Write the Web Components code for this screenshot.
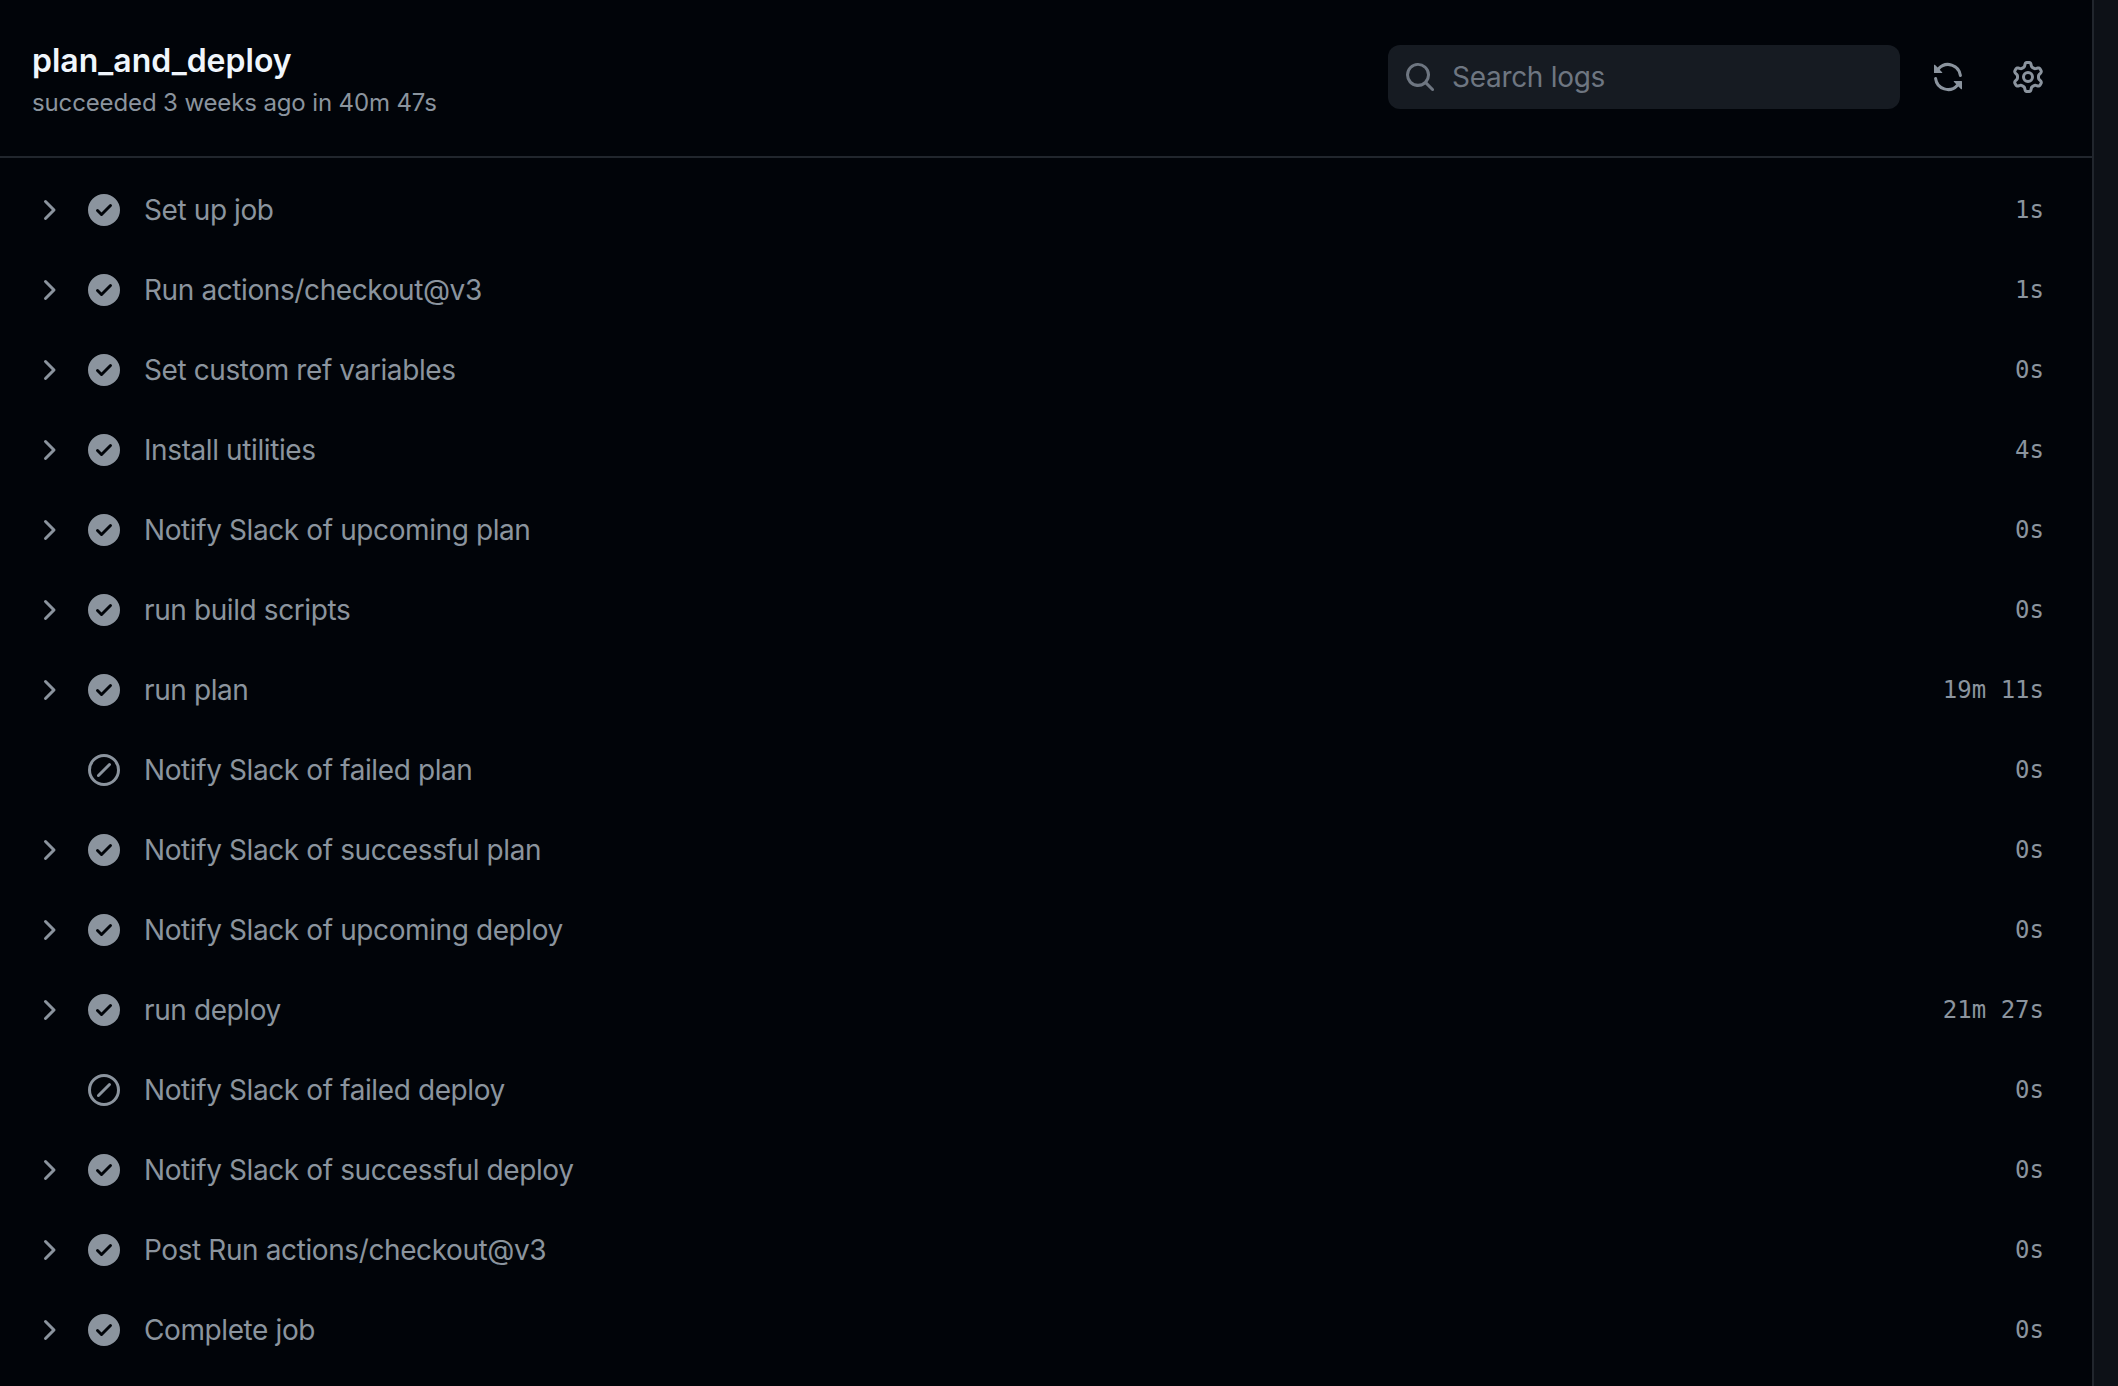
<!DOCTYPE html>
<html>
<head>
<meta charset="utf-8">
<title>plan_and_deploy</title>
<style>
  html, body { margin: 0; height: 100%; background: #0d1117; }
  body { font-family: Inter, "Liberation Sans", sans-serif; overflow: hidden; }
</style>
</head>
<body>
<job-page>
  <job-header>
    <span slot="title">plan_and_deploy</span>
    <span slot="meta">succeeded 3 weeks ago in 40m 47s</span>
  </job-header>
  <job-step status="success" time="1s">Set up job</job-step>
  <job-step status="success" time="1s">Run actions/checkout@v3</job-step>
  <job-step status="success" time="0s">Set custom ref variables</job-step>
  <job-step status="success" time="4s">Install utilities</job-step>
  <job-step status="success" time="0s">Notify Slack of upcoming plan</job-step>
  <job-step status="success" time="0s">run build scripts</job-step>
  <job-step status="success" time="19m 11s">run plan</job-step>
  <job-step status="skipped" time="0s">Notify Slack of failed plan</job-step>
  <job-step status="success" time="0s">Notify Slack of successful plan</job-step>
  <job-step status="success" time="0s">Notify Slack of upcoming deploy</job-step>
  <job-step status="success" time="21m 27s">run deploy</job-step>
  <job-step status="skipped" time="0s">Notify Slack of failed deploy</job-step>
  <job-step status="success" time="0s">Notify Slack of successful deploy</job-step>
  <job-step status="success" time="0s">Post Run actions/checkout@v3</job-step>
  <job-step status="success" time="0s">Complete job</job-step>
</job-page>

<script>
const ICONS = {
  check: 'M8 16A8 8 0 1 1 8 0a8 8 0 0 1 0 16Zm3.78-9.72a.751.751 0 0 0-.018-1.042.751.751 0 0 0-1.042-.018L6.75 9.19 5.28 7.72a.751.751 0 0 0-1.042.018.751.751 0 0 0-.018 1.042l2 2a.75.75 0 0 0 1.06 0Z',
  skip: 'M8 0a8 8 0 1 1 0 16A8 8 0 0 1 8 0ZM1.5 8a6.5 6.5 0 1 0 13 0 6.5 6.5 0 0 0-13 0Zm9.78-2.22-5.5 5.5a.749.749 0 0 1-1.275-.326.749.749 0 0 1 .215-.734l5.5-5.5a.751.751 0 0 1 1.042.018.751.751 0 0 1 .018 1.042Z',
  chevron: 'M6.22 3.22a.75.75 0 0 1 1.06 0l4.25 4.25a.75.75 0 0 1 0 1.06l-4.25 4.25a.751.751 0 0 1-1.042-.018.751.751 0 0 1-.018-1.042L9.94 8 6.22 4.28a.75.75 0 0 1 0-1.06Z',
  search: 'M10.68 11.74a6 6 0 0 1-7.922-8.982 6 6 0 0 1 8.982 7.922l3.04 3.04a.749.749 0 0 1-.326 1.275.749.749 0 0 1-.734-.215ZM11.5 7a4.499 4.499 0 1 0-8.997 0A4.499 4.499 0 0 0 11.5 7Z',
  sync: 'M1.705 8.005a.75.75 0 0 1 .834.656 5.5 5.5 0 0 0 9.592 2.97l-1.204-1.204a.25.25 0 0 1 .177-.427h3.646a.25.25 0 0 1 .25.25v3.646a.25.25 0 0 1-.427.177l-1.38-1.38A7.002 7.002 0 0 1 1.05 8.84a.75.75 0 0 1 .656-.834ZM8 2.5a5.487 5.487 0 0 0-4.131 1.869l1.204 1.204A.25.25 0 0 1 4.896 6H1.25A.25.25 0 0 1 1 5.75V2.104a.25.25 0 0 1 .427-.177l1.38 1.38A7.002 7.002 0 0 1 14.95 7.16a.75.75 0 0 1-1.49.178A5.5 5.5 0 0 0 8 2.5Z',
  gear: 'M8 0a8.2 8.2 0 0 1 .701.031C9.444.095 9.99.645 10.16 1.29l.288 1.107c.018.066.079.158.212.224.231.114.454.243.668.386.123.082.233.09.299.071l1.103-.303c.644-.176 1.392.021 1.82.63.27.385.506.792.704 1.218.315.675.111 1.422-.364 1.891l-.814.806c-.049.048-.098.147-.088.294.016.257.016.515 0 .772-.01.147.038.246.088.294l.814.806c.475.469.679 1.216.364 1.891a7.977 7.977 0 0 1-.704 1.217c-.428.61-1.176.807-1.82.63l-1.102-.302c-.067-.019-.177-.011-.3.071a5.909 5.909 0 0 1-.668.386c-.133.066-.194.158-.211.224l-.29 1.106c-.168.646-.715 1.196-1.458 1.26a8.006 8.006 0 0 1-1.402 0c-.743-.064-1.289-.614-1.458-1.26l-.289-1.106c-.018-.066-.079-.158-.212-.224a5.738 5.738 0 0 1-.668-.386c-.123-.082-.233-.09-.299-.071l-1.103.303c-.644.176-1.392-.021-1.82-.63a8.12 8.12 0 0 1-.704-1.218c-.315-.675-.111-1.422.363-1.891l.815-.806c.05-.048.098-.147.088-.294a6.214 6.214 0 0 1 0-.772c.01-.147-.038-.246-.088-.294l-.815-.806C.635 6.045.431 5.298.746 4.623a7.92 7.92 0 0 1 .704-1.217c.428-.61 1.176-.807 1.82-.63l1.102.302c.067.019.177.011.3-.071.214-.143.437-.272.668-.386.133-.066.194-.158.211-.224l.29-1.106C6.009.645 6.556.095 7.299.03 7.53.01 7.764 0 8 0Zm-.571 1.525c-.036.003-.108.036-.137.146l-.289 1.105c-.147.561-.549.967-.998 1.189-.173.086-.34.183-.5.29-.417.278-.97.423-1.529.27l-1.103-.303c-.109-.03-.175.016-.195.045-.22.312-.412.644-.573.99-.014.031-.021.11.059.19l.815.806c.411.406.562.957.53 1.456a4.709 4.709 0 0 0 0 .582c.032.499-.119 1.05-.53 1.456l-.815.806c-.081.08-.073.159-.059.19.162.346.353.677.573.989.02.03.085.076.195.046l1.102-.303c.56-.153 1.113-.008 1.53.27.161.107.328.204.501.29.447.222.85.629.997 1.189l.289 1.105c.029.109.101.143.137.146a6.6 6.6 0 0 0 1.142 0c.036-.003.108-.036.137-.146l.289-1.105c.147-.561.549-.967.998-1.189.173-.086.34-.183.5-.29.417-.278.97-.423 1.529-.27l1.103.303c.109.029.175-.016.195-.045.22-.313.411-.644.573-.99.014-.031.021-.11-.059-.19l-.815-.806c-.411-.406-.562-.957-.53-1.456a4.709 4.709 0 0 0 0-.582c-.032-.499.119-1.05.53-1.456l.815-.806c.081-.08.073-.159.059-.19a6.464 6.464 0 0 0-.573-.989c-.02-.03-.085-.076-.195-.046l-1.102.303c-.56.153-1.113.008-1.53-.27a4.44 4.44 0 0 0-.501-.29c-.447-.222-.85-.629-.997-1.189l-.289-1.105c-.029-.11-.101-.143-.137-.146a6.6 6.6 0 0 0-1.142 0ZM11 8a3 3 0 1 1-6 0 3 3 0 0 1 6 0ZM9.5 8a1.5 1.5 0 1 0-3.001.001A1.5 1.5 0 0 0 9.5 8Z'
};

function icon(name) {
  return `<svg viewBox="0 0 16 16" width="32" height="32" fill="currentColor" aria-hidden="true"><path d="${ICONS[name]}"></path></svg>`;
}

class JobPage extends HTMLElement {
  constructor() {
    super();
    this.attachShadow({ mode: 'open' });
    this.shadowRoot.innerHTML = `
      <style>
        :host {
          display: block;
          box-sizing: border-box;
          width: 2094px;
          height: 1386px;
          background: #010409;
          border-right: 2px solid #21262d;
        }
        .steps { display: flex; flex-direction: column; padding-top: 12px; }
      </style>
      <slot name="header"></slot>
      <div class="steps"><slot></slot></div>
    `;
  }
}

class JobHeader extends HTMLElement {
  constructor() {
    super();
    this.attachShadow({ mode: 'open' });
    this.shadowRoot.innerHTML = `
      <style>
        :host {
          display: flex;
          box-sizing: border-box;
          height: 158px;
          align-items: center;
          justify-content: space-between;
          padding: 0 48px 2px 32px;
          border-bottom: 2px solid #21262d;
        }
        .heading { margin-top: 6px; }
        .title { font-size: 32px; line-height: 40px; font-weight: 600; color: #f0f6fc; }
        .meta { font-size: 24px; line-height: 32px; color: #8b949e; margin-top: 6px; letter-spacing: -0.13px; }
        .tools { display: flex; align-items: center; color: #8b949e; }
        .search {
          display: flex;
          align-items: center;
          box-sizing: border-box;
          width: 512px;
          height: 64px;
          padding-left: 16px;
          gap: 16px;
          border-radius: 12px;
          background: #161b22;
          font-size: 28px;
          letter-spacing: -0.3px;
          color: #6e7681;
        }
        .btn { display: flex; margin-left: 32px; }
        .btn + .btn { margin-left: 48px; }
      </style>
      <div class="heading">
        <div class="title"><slot name="title"></slot></div>
        <div class="meta"><slot name="meta"></slot></div>
      </div>
      <div class="tools">
        <div class="search">${icon('search')}<span>Search logs</span></div>
        <span class="btn">${icon('sync')}</span>
        <span class="btn">${icon('gear')}</span>
      </div>
    `;
  }
  connectedCallback() {
    this.setAttribute('slot', 'header');
  }
}

class JobStep extends HTMLElement {
  constructor() {
    super();
    this.attachShadow({ mode: 'open' });
    const skipped = this.getAttribute('status') === 'skipped';
    this.shadowRoot.innerHTML = `
      <style>
        :host {
          display: flex;
          align-items: center;
          height: 80px;
          padding: 0 48px 0 32px;
          color: #8b949e;
          font-size: 28px;
        }
        svg { display: block; flex: none; }
        .chev { width: 32px; height: 32px; margin-right: 24px; }
        .status { width: 32px; height: 32px; margin-right: 24px; }
        .name { flex: 1; letter-spacing: -0.4px; }
        .time { font-family: "DejaVu Sans Mono", "Liberation Mono", monospace; font-size: 24px; }
      </style>
      <span class="chev">${skipped ? '' : icon('chevron')}</span>
      <span class="status">${icon(skipped ? 'skip' : 'check')}</span>
      <span class="name"><slot></slot></span>
      <span class="time">${this.getAttribute('time')}</span>
    `;
  }
}

customElements.define('job-page', JobPage);
customElements.define('job-header', JobHeader);
customElements.define('job-step', JobStep);
</script>
</body>
</html>
